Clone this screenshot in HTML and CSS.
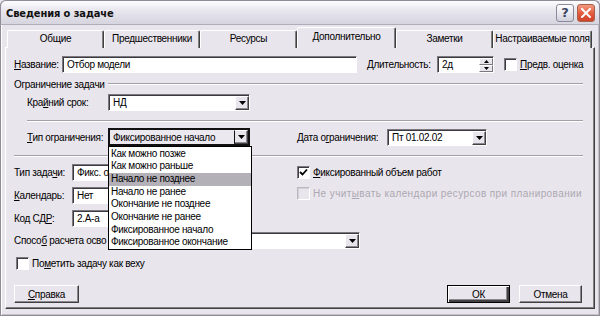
FILE: index.html
```html
<!DOCTYPE html>
<html lang="ru">
<head>
<meta charset="utf-8">
<link rel="stylesheet" href="styles.css">
</head>
<body>
<div class="window">
  <div class="titlebar">
    <span class="title">Сведения о задаче</span>
    <div class="tbtns">
      <span class="tb help">?</span>
      <span class="tb close"><svg width="10" height="10" viewBox="0 0 10 10"><path d="M1 1L9 9M9 1L1 9" stroke="#fff" stroke-width="2" stroke-linecap="square"/></svg></span>
    </div>
  </div>
  <div class="client">
    <div class="tabs">
      <div class="tab t97">Общие</div>
      <div class="tab t96">Предшественники</div>
      <div class="tab t97">Ресурсы</div>
      <div class="tab sel">Дополнительно</div>
      <div class="tab t97">Заметки</div>
      <div class="tab t99">Настраиваемые поля</div>
    </div>
    <div class="panel">
      <div class="row r1">
        <span class="lbl w48"><u>Н</u>азвание:</span>
        <span class="edit w295">Отбор модели</span>
        <span class="lbl w70 ml10"><u>Д</u>лительность:</span>
        <span class="edit spin">2д<span class="spinbtns"><span class="sb"><svg width="5" height="3" viewBox="0 0 5 3"><path d="M2.5 0L5 3H0z" fill="#000"/></svg></span><span class="sb"><svg width="5" height="3" viewBox="0 0 5 3"><path d="M0 0H5L2.5 3z" fill="#000"/></svg></span></span></span>
        <span class="chk ml10"></span>
        <span class="lbl ml3"><u>П</u>редв. оценка</span>
      </div>

      <div class="group">
        <span class="gtext">Ограничение задачи</span>
        <span class="etch grow"></span>
      </div>

      <div class="row r2 indent">
        <span class="lbl w81">Кра<u>й</u>ний срок:</span>
        <span class="combo w142"><span class="ctext">НД</span><span class="dbtn"><svg width="7" height="4" viewBox="0 0 7 4"><path d="M0 0H7L3.5 4z" fill="#000"/></svg></span></span>
      </div>

      <div class="etch sep1"></div>

      <div class="row r3 indent">
        <span class="lbl w81"><u>Т</u>ип ограничения:</span>
        <span class="combo w142 focus"><span class="ctext">Фиксированное начало</span><span class="dbtn"><svg width="7" height="4" viewBox="0 0 7 4"><path d="M0 0H7L3.5 4z" fill="#000"/></svg></span></span>
        <span class="lbl w90 ml47">Дата о<u>г</u>раничения:</span>
        <span class="combo w100"><span class="ctext">Пт 01.02.02</span><span class="dbtn"><svg width="7" height="4" viewBox="0 0 7 4"><path d="M0 0H7L3.5 4z" fill="#000"/></svg></span></span>
      </div>

      <div class="etch sep2"></div>

      <div class="cols">
        <div class="lcol">
          <div class="row lrow first">
            <span class="lbl w58">Тип зада<u>ч</u>и:</span>
            <span class="edit w178">Фикс. об</span>
          </div>
          <div class="row lrow">
            <span class="lbl w58"><u>К</u>алендарь:</span>
            <span class="edit w178">Нет</span>
          </div>
          <div class="row lrow">
            <span class="lbl w58">Код СД<u>Р</u>:</span>
            <span class="edit w178">2.А-а</span>
          </div>
        </div>
        <div class="rcol">
          <div class="crow first">
            <span class="chk checked"><svg width="9" height="9" viewBox="0 0 9 9"><path d="M1 4L3.5 6.5L8 1.5" stroke="#000" stroke-width="1.8" fill="none"/></svg></span>
            <span class="lbl ml3"><u>Ф</u>иксированный объем работ</span>
          </div>
          <div class="crow">
            <span class="chk disabled"></span>
            <span class="lbl ml3 dis">Не учит<u>ы</u>вать календари ресурсов при планировании</span>
          </div>
        </div>
      </div>

      <div class="row r4">
        <span class="lbl w176">Спосо<u>б</u> расчета осво</span>
        <span class="combo w170"><span class="ctext"></span><span class="dbtn"><svg width="7" height="4" viewBox="0 0 7 4"><path d="M0 0H7L3.5 4z" fill="#000"/></svg></span></span>
      </div>

      <div class="crow r5">
        <span class="chk ml2"></span>
        <span class="lbl ml3">По<u>м</u>етить задачу как веху</span>
      </div>

      <div class="btnrow">
        <span class="btn"><u>С</u>правка</span>
        <span class="spacer"></span>
        <span class="btn def">ОК</span>
        <span class="btn">Отмена</span>
      </div>

      <div class="dlist">
        <div class="item">Как можно позже</div>
        <div class="item">Как можно раньше</div>
        <div class="item hl">Начало не позднее</div>
        <div class="item">Начало не ранее</div>
        <div class="item">Окончание не позднее</div>
        <div class="item">Окончание не ранее</div>
        <div class="item">Фиксированное начало</div>
        <div class="item">Фиксированное окончание</div>
      </div>
    </div>
  </div>
</div>
</body>
</html>
```

FILE: styles.css
```css
* { box-sizing: border-box; }
html, body { margin: 0; padding: 0; }
body {
  width: 600px;
  height: 316px;
  overflow: hidden;
  background: #e9e5ec;
  font-family: "Liberation Sans", Arial, sans-serif;
  font-size: 10px;
  letter-spacing: -0.3px;
  color: #000;
}
u { text-decoration: underline; text-underline-offset: 1px; }

.window {
  width: 600px;
  height: 316px;
  background: #e9e5ec;
  border: 1px solid #8f8c98;
  border-top: none;
  border-radius: 6px 6px 0 0;
  padding: 0 2px 2px 2px;
  display: flex;
  flex-direction: column;
  box-shadow: inset 1px 0 #fff, inset -1px -1px #c4c0c8;
}

.titlebar {
  height: 25px;
  margin: 0 -3px;
  border-radius: 6px 6px 0 0;
  border: 1px solid #8f8c98;
  border-bottom: 1px solid #b0adb8;
  background: linear-gradient(#fdfdfe 0%, #eeecf2 30%, #e2e0e8 60%, #d6d4de 100%);
  display: flex;
  align-items: center;
  padding: 0 4px 0 5px;
}
.title {
  font-family: "DejaVu Sans Condensed", "DejaVu Sans", sans-serif;
  font-weight: bold;
  font-size: 11px;
  letter-spacing: -0.1px;
  color: #111;
  flex: 1;
  padding-top: 1px;
}
.tbtns { display: flex; gap: 3px; }
.tb {
  width: 18px;
  height: 18px;
  border-radius: 3px;
  display: flex;
  align-items: center;
  justify-content: center;
}
.help {
  border: 1px solid #8a8a9a;
  background: linear-gradient(#ffffff, #e4e4ec 60%, #d0d0dc);
  color: #3b4663;
  font-weight: bold;
  font-size: 13px;
  letter-spacing: 0;
  font-family: "DejaVu Sans", sans-serif;
}
.close {
  border: 1px solid #a8604c;
  background: linear-gradient(#f39a80, #e2583a 55%, #d0452a);
}

.client {
  flex: 1;
  display: flex;
  flex-direction: column;
  padding: 2px 0 4px 0;
}

.tabs {
  display: flex;
  align-items: flex-end;
  margin-left: 4px;
  height: 21px;
  margin-bottom: -1px;
  position: relative;
  z-index: 2;
}
.tab {
  height: 18px;
  border-top: 1px solid #fff;
  border-left: 1px solid #fff;
  border-right: 1px solid #404040;
  box-shadow: inset -1px 0 #808080;
  border-radius: 2px 2px 0 0;
  background: #e9e5ec;
  text-align: center;
  line-height: 16px;
  white-space: nowrap;
  overflow: hidden;
}
.t96 { width: 96px; }
.t97 { width: 97px; }
.t99 { width: 99px; }
.sel {
  width: 99px;
  height: 21px;
  line-height: 18px;
}

.panel {
  position: relative;
  margin: 0 2px;
  height: 262px;
  border-top: 1px solid #fff;
  border-left: 1px solid #fff;
  border-right: 1px solid #404040;
  border-bottom: 1px solid #404040;
  box-shadow: inset -1px -1px #808080;
  padding: 8px 11px 0 8px;
  display: flex;
  flex-direction: column;
}

.row { display: flex; align-items: center; height: 17px; white-space: nowrap; }
.lbl { white-space: nowrap; }
.w48 { width: 48px; flex: none; }
.w58 { width: 58px; flex: none; }
.w70 { width: 70px; flex: none; }
.w81 { width: 81px; flex: none; }
.w90 { width: 90px; flex: none; }
.w176 { width: 176px; flex: none; }
.ml2 { margin-left: 2px; }
.ml3 { margin-left: 3px; }
.ml10 { margin-left: 10px; }
.ml47 { margin-left: 47px; }

.edit, .combo {
  height: 17px;
  background: #fff;
  border: 1px solid;
  border-color: #7c7880 #fff #fff #7c7880;
  box-shadow: inset 1px 1px #3c3a40;
  padding: 0 0 0 4px;
  line-height: 15px;
  display: flex;
  align-items: center;
  overflow: hidden;
  white-space: nowrap;
  flex: none;
}
.w295 { width: 295px; }
.w178 { width: 178px; }
.w142 { width: 142px; }
.w100 { width: 100px; }
.w170 { width: 170px; }

.spin { width: 57px; position: relative; }
.spinbtns {
  position: absolute;
  right: 0;
  top: 1px;
  bottom: 0;
  width: 14px;
  display: flex;
  flex-direction: column;
}
.sb {
  flex: 1;
  background: #e9e5ec;
  border: 1px solid;
  border-color: #fff #7c7880 #7c7880 #fff;
  display: flex;
  align-items: center;
  justify-content: center;
}

.combo { padding-right: 0; }
.ctext { flex: 1; overflow: hidden; }
.dbtn {
  width: 14px;
  height: 14px;
  align-self: flex-end;
  background: #e9e5ec;
  border: 1px solid;
  border-color: #fff #404040 #404040 #fff;
  box-shadow: inset -1px -1px #8c8890;
  display: flex;
  align-items: center;
  justify-content: center;
  flex: none;
}
.combo.focus {
  height: 18px;
  border: 2px solid #111;
  box-shadow: none;
  background: #ece8f0;
  padding-left: 3px;
}
.combo.focus .dbtn { height: 14px; align-self: center; border-left: 1px solid #111; }

.chk {
  width: 13px;
  height: 13px;
  flex: none;
  background: #fff;
  border: 1px solid;
  border-color: #7c7880 #fff #fff #7c7880;
  box-shadow: inset 1px 1px #3c3a40;
  display: flex;
  align-items: center;
  justify-content: center;
}
.chk.disabled {
  background: #e9e5ec;
  border-color: #bcb8c0 #fff #fff #bcb8c0;
  box-shadow: inset 1px 1px #d4d0d8;
}
.dis { color: #aca8b2; letter-spacing: 0.4px; }

.group {
  display: flex;
  align-items: center;
  height: 12px;
  margin-top: 5px;
}
.gtext { white-space: nowrap; margin-right: 3px; }
.grow { flex: 1; }
.etch {
  height: 2px;
  border-top: 1px solid #a4a0a8;
  border-bottom: 1px solid #fff;
}
.indent { padding-left: 13px; }
.r2 { margin-top: 4px; }
.sep1 { margin-top: 9px; margin-left: 13px; }
.r3 { margin-top: 6px; height: 18px; }
.sep2 { margin-top: 9px; }

.cols { display: flex; }
.lcol { width: 283px; flex: none; display: flex; flex-direction: column; }
.lrow { margin-top: 6px; }
.lrow.first { margin-top: 7px; }
.rcol { flex: 1; display: flex; flex-direction: column; }
.crow { display: flex; align-items: center; height: 13px; margin-top: 8px; white-space: nowrap; }
.crow.first { margin-top: 9px; }

.r4 { margin-top: 5px; }
.r5 { margin-top: 8px; }

.btnrow { display: flex; margin-top: 15px; gap: 9px; height: 18px; padding-right: 1px; }
.spacer { flex: 1; }
.btn {
  width: 63px;
  height: 18px;
  border: 1px solid;
  border-color: #fff #404040 #404040 #fff;
  box-shadow: inset -1px -1px #8c8890;
  display: flex;
  align-items: center;
  justify-content: center;
  background: #e9e5ec;
}
.btnrow .btn:first-child { width: 65px; margin-right: -9px; }
.btn.def {
  border: 1px solid #000;
  box-shadow: inset 1px 1px #fff, inset -2px -2px #404040, inset -3px -3px #8c8890;
}

.dlist {
  position: absolute;
  left: 102px;
  top: 98px;
  width: 144px;
  height: 104px;
  background: #fff;
  border: 1px solid #000;
  z-index: 5;
  padding-top: 0.5px;
}
.item {
  height: 12.7px;
  line-height: 12.7px;
  padding-left: 2px;
  white-space: nowrap;
}
.item.hl { background: #b4b0b8; }
```
